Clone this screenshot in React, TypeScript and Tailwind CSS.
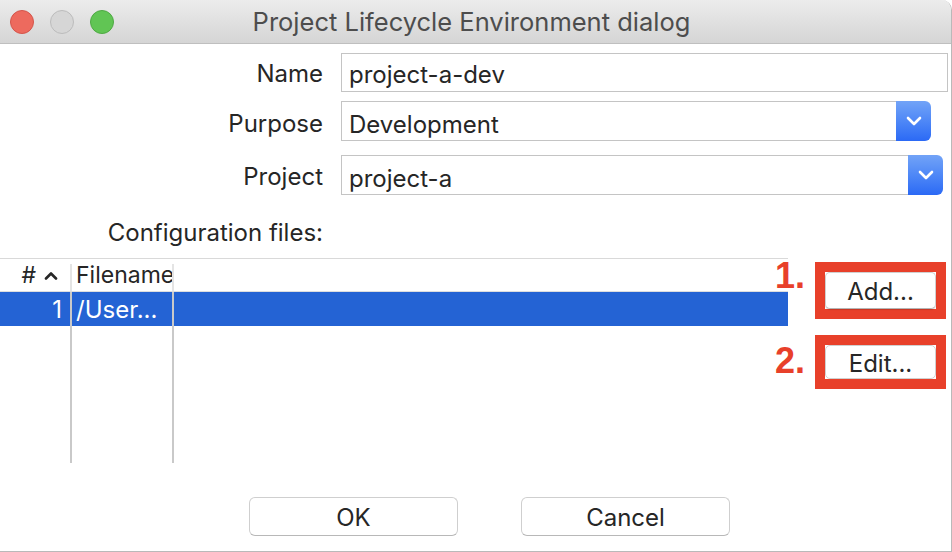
import React from "react";

function Chevron() {
  return (
    <svg width="16" height="10" viewBox="0 0 16 10" fill="none">
      <path d="M2 2 L8 8 L14 2" stroke="white" strokeWidth="2.6" strokeLinecap="round" strokeLinejoin="round" />
    </svg>
  );
}

function Select({ value, width }: { value: string; width: string }) {
  return (
    <div className={`flex h-[40px] ${width}`}>
      <div className="flex-1 flex items-center pl-[7px] pt-[7px] border border-[#c4c4c4] border-r-0 bg-white text-[24px] text-[#262626]">
        {value}
      </div>
      <div className="w-[35px] h-full rounded-r-[6px] bg-gradient-to-b from-[#72a3f7] to-[#2b69f5] flex items-center justify-center">
        <Chevron />
      </div>
    </div>
  );
}

export default function App() {
  return (
    <div className="w-[952px] h-[552px] bg-white overflow-hidden font-['Inter',sans-serif] text-[#262626]">
      <div className="w-[952px] h-[552px] flex flex-col border-r border-b border-[#b9b9b9] rounded-tr-[10px] overflow-hidden">
        {/* Title bar */}
        <div className="h-[44px] shrink-0 grid grid-cols-[1fr_auto_1fr] items-center bg-gradient-to-b from-[#ececec] to-[#d5d5d5] border-b border-[#bfbfbf]">
          <div className="flex items-center gap-[16px] pl-[10px]">
            <div className="w-[24px] h-[24px] rounded-full bg-[#ed6a5e] border border-[#d4554b]" />
            <div className="w-[24px] h-[24px] rounded-full bg-[#d6d6d6] border border-[#bcbcbc]" />
            <div className="w-[24px] h-[24px] rounded-full bg-[#61c554] border border-[#4fa944]" />
          </div>
          <div className="text-[25.5px] text-[#4d4d4d] pr-[8px] pt-[1px]">Project Lifecycle Environment dialog</div>
          <div />
        </div>

        {/* Form */}
        <div className="flex flex-col text-[24px]">
          <div className="flex items-center mt-[9px] h-[39px]">
            <div className="w-[323px] text-right pt-[3px]">Name</div>
            <div className="ml-[18px] w-[607px] h-[39px] border border-[#c4c4c4] flex items-center pl-[7px] pt-[4px]">
              project-a-dev
            </div>
          </div>
          <div className="flex items-center mt-[9px] h-[40px]">
            <div className="w-[323px] text-right pt-[5px]">Purpose</div>
            <div className="ml-[18px]">
              <Select value="Development" width="w-[590px]" />
            </div>
          </div>
          <div className="flex items-center mt-[14px] h-[40px]">
            <div className="w-[323px] text-right pt-[4px]">Project</div>
            <div className="ml-[18px]">
              <Select value="project-a" width="w-[602px]" />
            </div>
          </div>
          <div className="flex items-center mt-[18px] h-[38px]">
            <div className="w-[323px] text-right pt-[1px]">Configuration files:</div>
          </div>
        </div>

        {/* Table + side buttons */}
        <div className="flex mt-[7px] h-[205px]">
          <div className="w-[788px] flex flex-col border-t border-[#d9d9d9]">
            {/* header */}
            <div className="h-[33px] flex items-center border-b border-[#dedede] text-[23px]">
              <div className="w-[70px] flex items-center justify-end pr-[12px] gap-[8px]">
                <span className="pl-[2px]">#</span>
                <svg width="14" height="9" viewBox="0 0 14 9" fill="none">
                  <path d="M2 7.5 L7 2.5 L12 7.5" stroke="#262626" strokeWidth="2.6" strokeLinecap="round" strokeLinejoin="round" />
                </svg>
              </div>
              <div className="w-[2px] h-[27px] self-end bg-[#e4e4e4]" />
              <div className="w-[100px] pl-[4px]">Filename</div>
              <div className="w-[2px] h-[27px] self-end bg-[#e4e4e4]" />
              <div className="flex-1" />
            </div>
            {/* selected row */}
            <div className="h-[34px] flex bg-[#2463d4] text-white text-[24px]">
              <div className="w-[70px] flex items-center justify-end pr-[8px] pt-[2px]">1</div>
              <div className="w-[2px] h-full bg-[#c9c9c9]" />
              <div className="w-[100px] flex items-center pl-[4px] pt-[2px]">/User...</div>
              <div className="w-[2px] h-full bg-[#c9c9c9]" />
              <div className="flex-1" />
            </div>
            {/* filler */}
            <div className="h-[137px] flex">
              <div className="w-[70px]" />
              <div className="w-[2px] h-full bg-[#c9c9c9]" />
              <div className="w-[100px]" />
              <div className="w-[2px] h-full bg-[#c9c9c9]" />
              <div className="flex-1" />
            </div>
          </div>

          <div className="ml-[27px] flex flex-col">
            <div className="relative mt-[4px] w-[131px] border-[10px] border-[#e8402a]">
              <span className="absolute right-[131px] top-[-14px] font-['Liberation_Sans',sans-serif] font-bold text-[36px] leading-none text-[#e8402a]">1.</span>
              <div className="h-[37px] bg-white border border-[#d0d0d0] border-b-[#b5b5b5] rounded-[5px] flex items-center justify-center pt-[3px] text-[24px] shadow-[0_1px_1px_rgba(0,0,0,0.15)]">
                Add...
              </div>
            </div>
            <div className="relative mt-[16px] w-[131px] border-[10px] border-[#e8402a]">
              <span className="absolute right-[131px] top-[-2px] font-['Liberation_Sans',sans-serif] font-bold text-[36px] leading-none text-[#e8402a]">2.</span>
              <div className="h-[34px] bg-white border border-[#d0d0d0] rounded-[5px] flex items-center justify-center pt-[3px] text-[24px]">
                Edit...
              </div>
            </div>
          </div>
        </div>

        {/* Bottom buttons */}
        <div className="flex mt-[34px] text-[24px]">
          <div className="ml-[249px] w-[209px] h-[39px] bg-white border border-[#cfcfcf] border-b-[#b8b8b8] rounded-[6px] flex items-center justify-center pt-[2px]">
            OK
          </div>
          <div className="ml-[63px] w-[209px] h-[39px] bg-white border border-[#cfcfcf] border-b-[#b8b8b8] rounded-[6px] flex items-center justify-center pt-[2px]">
            Cancel
          </div>
        </div>
      </div>
    </div>
  );
}
